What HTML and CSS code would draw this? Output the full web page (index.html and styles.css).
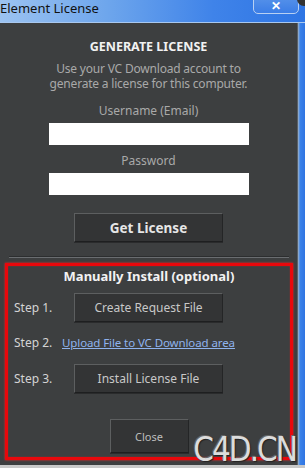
FILE: index.html
```html
<!DOCTYPE html>
<html lang="en">
<head>
  <meta charset="UTF-8" />
  <title>Element License</title>
  <link rel="stylesheet" href="styles.css">
</head>
<body>
  <div class="window">
    <div class="titlebar">
      <span class="title">Element License</span>
      <span class="close-btn">&#10005;</span>
      <span class="corner-dot"></span>
    </div>

    <div class="body">
      <div class="panel">
        <h1 class="heading">GENERATE LICENSE</h1>
        <p class="desc">Use your VC Download account to<br>generate a license for this computer.</p>

        <label class="field-label">Username (Email)</label>
        <input class="field" type="text">

        <label class="field-label pass">Password</label>
        <input class="field" type="password">

        <button class="btn get-license">Get License</button>

        <div class="separator"></div>

        <div class="manual">
          <h2 class="manual-title">Manually Install (optional)</h2>

          <div class="step">
            <span class="step-label">Step 1.</span>
            <button class="btn step-btn">Create Request File</button>
          </div>
          <div class="step step-link">
            <span class="step-label">Step 2.</span>
            <a href="#" class="link">Upload File to VC Download area</a>
          </div>
          <div class="step">
            <span class="step-label">Step 3.</span>
            <button class="btn step-btn">Install License File</button>
          </div>

          <button class="btn close">Close</button>
        </div>

        <span class="watermark">C4D.CN</span>
      </div>
      <div class="frame-right"></div>
    </div>
    <div class="frame-bottom"></div>
  </div>
</body>
</html>
```

FILE: styles.css
```css
* { margin: 0; padding: 0; box-sizing: border-box; }

body {
  width: 305px;
  height: 468px;
  overflow: hidden;
  background: #3d3f40;
  font-family: "Noto Sans", "Open Sans", sans-serif;
}

.window {
  display: flex;
  flex-direction: column;
  height: 468px;
}

/* Barra de título */
.titlebar {
  position: relative;
  height: 23px;
  flex-shrink: 0;
  background: linear-gradient(90deg, #9cc3f1 0%, #6ea6ec 35%, #3f83e9 70%, #2e75e4 100%);
  border-bottom: 1px solid #a9c8ef;
}

.title {
  display: block;
  font-size: 13px;
  line-height: 17px;
  color: #111;
}

.close-btn {
  position: absolute;
  right: 6px;
  top: -6px;
  width: 46px;
  height: 20px;
  border: 1px solid #b8d0f2;
  border-radius: 0 0 5px 5px;
  background: linear-gradient(#5a95ea, #3b7de6);
  color: #fff;
  font-size: 12px;
  font-weight: bold;
  line-height: 21px;
  text-align: center;
}

.corner-dot {
  position: absolute;
  right: -6px;
  top: -8px;
  width: 14px;
  height: 14px;
  border-radius: 50%;
  background: #333;
}

.body {
  display: flex;
  flex: 1;
}

.panel {
  position: relative;
  flex: 1;
  display: flex;
  flex-direction: column;
  align-items: center;
  background: #3d3f40;
  border-right: 1px solid #5c6166;
  padding-top: 16px;
}

.frame-right {
  width: 7px;
  background: linear-gradient(90deg, #9fb5cc 0%, #3b82e8 30%, #2f74e2 100%);
}

.frame-bottom {
  height: 3px;
  background: #c9c9c9;
}

.heading {
  font-size: 12.5px;
  font-weight: bold;
  color: #f2f2f2;
  line-height: 16px;
}

.desc {
  margin-top: 7px;
  font-size: 12px;
  line-height: 14.5px;
  color: #a9a9a9;
  text-align: center;
  letter-spacing: -0.2px;
}

.field-label {
  margin-top: 13px;
  font-size: 12px;
  line-height: 14px;
  color: #a9a9a9;
}

.field-label.pass { margin-top: 9px; }

.field {
  margin-top: 5px;
  width: 200px;
  height: 22px;
  border: none;
  background: #fff;
  outline: none;
}

.btn {
  font-family: "Noto Sans", "Open Sans", sans-serif;
  background: #333435;
  border: 1px solid #5d5f60;
  border-bottom-color: #1e1f20;
  border-right-color: #242526;
  box-shadow: 0 1px 0 #2a2b2c;
  color: #cfcfcf;
  cursor: pointer;
}

.get-license {
  margin-top: 18px;
  width: 149px;
  height: 29px;
  font-size: 13.5px;
  font-weight: bold;
  color: #e6e6e6;
}

.separator {
  margin-top: 15px;
  width: 280px;
  height: 1px;
  background: #6a6d70;
  box-shadow: 0 -1px 0 #2c2e2f;
}

/* Instalação manual */
.manual {
  align-self: stretch;
  margin: 5px 4px 0 5px;
  height: 197px;
  border: 3px solid #e8080c;
  box-shadow: 0 0 2px #ff2020, inset 0 0 1px #ff2020;
  display: flex;
  flex-direction: column;
  padding: 3px 0 0 6px;
}

.manual-title {
  align-self: center;
  margin-left: -6px;
  font-size: 13px;
  font-weight: bold;
  line-height: 14px;
  color: #f2f2f2;
}

.step {
  display: flex;
  align-items: center;
  margin-top: 10px;
}

.step-link { margin-top: 12px; }

.step-link + .step { margin-top: 13px; }

.step-label {
  width: 48px;
  font-size: 12px;
  color: #d4d4d4;
}

.step-btn {
  margin-left: 12px;
  width: 149px;
  height: 29px;
  font-size: 12px;
  color: #c8c8c8;
}

.link {
  font-size: 11.5px;
  line-height: 16px;
  color: #8fb3ee;
  text-decoration: underline;
  letter-spacing: -0.1px;
}

.close {
  align-self: center;
  margin-left: -6px;
  margin-top: 26px;
  width: 79px;
  height: 34px;
  font-size: 11px;
  color: #bdbdbd;
}

.watermark {
  position: absolute;
  right: 1px;
  bottom: 0;
  font-family: "Liberation Sans Narrow", "DejaVu Sans Condensed", sans-serif;
  font-size: 33px;
  letter-spacing: -2px;
  color: #dcdcdc;
  text-shadow: 1px 1px 1px #222, -1px -1px 0 #666;
  line-height: 30px;
}
```
